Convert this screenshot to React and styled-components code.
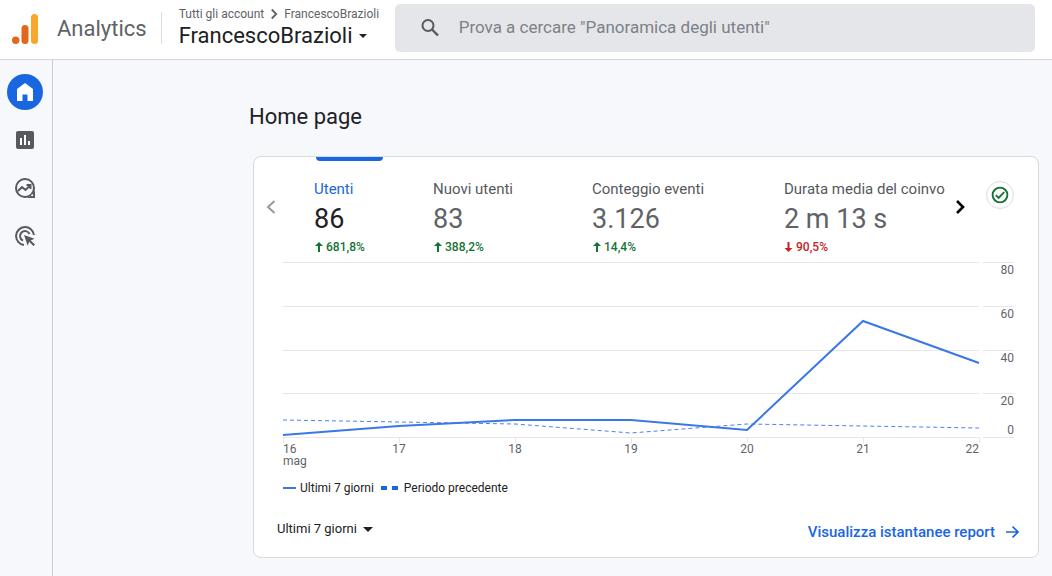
import React from "react";
import styled, { createGlobalStyle } from "styled-components";

const GlobalStyle = createGlobalStyle`
  *, *::before, *::after { box-sizing: border-box; }
  html, body, #root { height: 100%; }
  body {
    margin: 0;
    background: #f7f8fb;
    color: #202124;
    font-family: Roboto, "Liberation Sans", sans-serif;
    font-size: 12px;
    line-height: 16px;
  }
  button, input, select { font: inherit; color: inherit; }
  button { padding: 0; border: 0; background: none; cursor: pointer; text-align: left; }
  svg { display: block; flex: none; }
`;

const Page = styled.div`
  min-height: 100%;
  display: flex;
  flex-direction: column;
`;

const Header = styled.header`
  display: flex;
  height: 60px;
  padding: 0 17px 0 12px;
  background: #fff;
  border-bottom: 1px solid #d3d5d9;
`;

const Brand = styled.a`
  display: flex;
  align-items: center;
  gap: 18px;
  height: 57px;
  color: #5f6368;
  font-size: 22px;
  line-height: 28px;
  text-decoration: none;
`;

const Divider = styled.div`
  width: 1px;
  height: 32px;
  margin: 12px 17px 0 14px;
  background: #dadce0;
`;

const Account = styled.div`
  display: flex;
  flex-direction: column;
  width: 216px;
  padding-top: 6px;
`;

const Crumbs = styled.nav`
  display: flex;
  align-items: center;
  gap: 4px;
  white-space: nowrap;
  color: #5f6368;
`;

const Crumb = styled.a`
  color: inherit;
  text-decoration: none;
`;

const AccountButton = styled.button`
  display: flex;
  align-items: center;
  gap: 6px;
  font-size: 22px;
  line-height: 28px;
  color: #202124;
`;

const Search = styled.label`
  flex: 1;
  display: flex;
  align-items: center;
  gap: 18px;
  height: 48px;
  margin-top: 4px;
  padding: 0 24px;
  border-radius: 5px;
  background: #e5e6ea;
`;

const SearchInput = styled.input`
  flex: 1;
  min-width: 0;
  padding: 0 0 2px;
  border: 0;
  outline: 0;
  background: none;
  font-size: 17px;
  line-height: 24px;
  &::placeholder { color: #7c8186; opacity: 1; }
`;

const Body = styled.div`
  flex: 1;
  display: flex;
`;

const Sidebar = styled.nav`
  display: flex;
  flex-direction: column;
  align-items: center;
  gap: 12px;
  width: 53px;
  padding: 14px 3px 0 0;
  border-right: 1px solid #cacdd1;
`;

const NavLink = styled.a`
  display: flex;
  align-items: center;
  justify-content: center;
  width: 36px;
  height: 36px;
  border-radius: 50%;
  color: ${(p) => (p.$active ? "#fff" : "#56595e")};
  background: ${(p) => (p.$active ? "#1967e0" : "transparent")};
`;

const Main = styled.main`
  flex: 1;
  min-width: 0;
  padding: 43px 13px 18px 200px;
`;

const Title = styled.h1`
  margin: 0 0 25px -4px;
  font-size: 22px;
  line-height: 28px;
  font-weight: 400;
`;

const Card = styled.section`
  padding: 0 14px 9px 10px;
  border: 1px solid #d8dade;
  border-radius: 8px;
  background: #fff;
`;

const CardTop = styled.div`
  display: flex;
  height: 105px;
  padding-right: 10px;
`;

const Arrow = styled.button`
  display: flex;
  justify-content: center;
  width: 16px;
  height: 16px;
  margin-top: 42px;
  color: ${(p) => (p.disabled ? "#9a9a9a" : "#000")};
`;

const Metrics = styled.div`
  flex: 1;
  min-width: 0;
  display: grid;
  grid-template-columns: 119fr 159fr 192fr 157fr;
  margin: 0 11px 0 34px;
`;

const Metric = styled.button`
  position: relative;
  display: flex;
  flex-direction: column;
  min-width: 0;
  padding-top: 22px;
  color: #5f6368;
  ${(p) => p.$active && `
    &::before {
      content: "";
      position: absolute;
      top: 0;
      left: 2px;
      width: 67px;
      height: 4px;
      border-radius: 0 0 4px 4px;
      background: #1967e0;
    }
  `}
`;

const MetricName = styled.span`
  font-size: 15px;
  line-height: 20px;
  white-space: nowrap;
  color: ${(p) => (p.$active ? "#1967e0" : "#55595e")};
`;

const MetricValue = styled.span`
  font-size: 27px;
  line-height: 40px;
  white-space: nowrap;
  color: ${(p) => (p.$active ? "#202124" : "#5f6368")};
`;

const Delta = styled.span`
  display: flex;
  align-items: center;
  gap: 2px;
  font-weight: 500;
  color: ${(p) => (p.$down ? "#c5221f" : "#137333")};
`;

const Status = styled.button`
  display: flex;
  align-items: center;
  justify-content: center;
  width: 28px;
  height: 28px;
  margin: 24px 0 0 18px;
  border: 1px solid #dadce0;
  border-radius: 50%;
  color: #137333;
`;

const Chart = styled.div`
  display: grid;
  grid-template-columns: 1fr 31px;
  column-gap: 4px;
  padding: 0 10px 0 19px;
  color: #5f6368;
`;

const Plot = styled.svg`
  width: 100%;
  height: 181px;
  overflow: visible;
`;

const YAxis = styled.div`
  display: flex;
  flex-direction: column;
  height: 176px;
  border-bottom: 1px solid #e8e8e8;
  text-align: right;
`;

const YBand = styled.div`
  flex: 1;
  display: flex;
  flex-direction: column;
  justify-content: space-between;
  border-top: 1px solid #e8e8e8;
  line-height: 14px;
`;

const XAxis = styled.div`
  display: grid;
  grid-template-columns: 1fr repeat(5, 2fr) 1fr;
  line-height: 12px;
  text-align: center;
`;

const XLabel = styled.span`
  white-space: pre-line;
  &:first-child { text-align: left; }
  &:last-child { text-align: right; }
`;

const Legend = styled.div`
  display: flex;
  gap: 7px;
  padding: 13px 0 0 19px;
`;

const LegendItem = styled.span`
  display: flex;
  align-items: center;
  gap: 4px;
`;

const CardFooter = styled.footer`
  display: flex;
  align-items: center;
  justify-content: space-between;
  margin-top: 20px;
  padding: 0 5px 0 13px;
`;

const RangeField = styled.label`
  display: flex;
  align-items: center;
  height: 32px;
  padding-bottom: 6px;
`;

const RangeSelect = styled.select`
  appearance: none;
  margin-right: -10px;
  padding: 0 16px 0 0;
  border: 0;
  outline: 0;
  background: none;
  font-size: 13px;
  line-height: 18px;
`;

const ReportLink = styled.a`
  display: flex;
  align-items: center;
  gap: 11px;
  color: #1967e0;
  font-size: 15px;
  line-height: 20px;
  font-weight: 500;
  text-decoration: none;
`;

const Logo = () => (
  <svg width="27" height="30" viewBox="0 0 27 30" aria-hidden="true">
    <rect x="19" y="0" width="7" height="30" rx="3.5" fill="#f9a62b" />
    <rect x="9.5" y="11" width="7" height="19" rx="3.5" fill="#e2661c" />
    <circle cx="3.7" cy="26.3" r="3.7" fill="#e2661c" />
  </svg>
);

const Chevron = ({ left, size = 16, stroke = 2.2 }) => (
  <svg width={size} height={size} viewBox="0 0 16 16" fill="none" stroke="currentColor" strokeWidth={stroke} aria-hidden="true">
    <path d={left ? "M10.5 2 4 8l6.5 6" : "m5 2 6 6-6 6"} />
  </svg>
);

const Caret = ({ width = 10 }) => (
  <svg width={width} height={width / 2} viewBox="0 0 10 5" fill="currentColor" aria-hidden="true">
    <path d="M0 0h10L5 5z" />
  </svg>
);

const Trend = ({ down }) => (
  <svg width="10" height="12" viewBox="0 0 10 12" fill="none" stroke="currentColor" strokeWidth="2" aria-hidden="true">
    {down ? <><path d="M4.5 1v8" /><path d="M.5 7h8L4.5 11z" fill="currentColor" stroke="none" /></>
          : <><path d="M5 3v8" /><path d="M1 5h8L5 1z" fill="currentColor" stroke="none" /></>}
  </svg>
);

const icons = {
  home: (
    <svg width="18" height="20" viewBox="0 0 18 20" fill="currentColor" aria-hidden="true">
      <path d="M9 1 1 7v12h5.5v-6.5h5V19H17V7z" />
    </svg>
  ),
  reports: (
    <svg width="18" height="18" viewBox="0 0 18 18" aria-hidden="true">
      <rect width="18" height="18" rx="2" fill="currentColor" />
      <path d="M5 14V7M9 14V4M13 14v-4" stroke="#fff" strokeWidth="2" />
    </svg>
  ),
  explore: (
    <svg width="20" height="20" viewBox="0 0 20 20" fill="none" stroke="currentColor" strokeWidth="2" aria-hidden="true">
      <circle cx="10" cy="10" r="9" />
      <path d="m3 13 4-4 3.5 3L15 7.5M11.5 7H15.5v4" />
      <path d="M20 10v10H10c4 0 10-4 10-10z" fill="currentColor" stroke="none" />
      <circle cx="17.2" cy="17.3" r="1" fill="#fff" stroke="none" />
    </svg>
  ),
  ads: (
    <svg width="20" height="20" viewBox="0 0 20 20" fill="none" stroke="currentColor" strokeWidth="2" aria-hidden="true">
      <path d="M9 19A9 9 0 1 1 19 9" />
      <path d="M8 14.6A5 5 0 1 1 14.6 8" />
      <path d="m9 9 10.5 3.8-3.8 1.6 4.3 4.2-1.5 1.5-4.3-4.3-1.5 4z" fill="currentColor" stroke="none" />
    </svg>
  ),
};

const navItems = [
  { id: "home", label: "Home page" },
  { id: "reports", label: "Report" },
  { id: "explore", label: "Esplora" },
  { id: "ads", label: "Pubblicità" },
];

const metrics = [
  { name: "Utenti", value: "86", delta: "681,8%", active: true },
  { name: "Nuovi utenti", value: "83", delta: "388,2%" },
  { name: "Conteggio eventi", value: "3.126", delta: "14,4%" },
  { name: "Durata media del coinvo", value: "2 m 13 s", delta: "90,5%", down: true },
];

const days = ["16\nmag", "17", "18", "19", "20", "21", "22"];
const gridLines = [0, 44, 88, 131, 175];
const current = [173, 164, 158, 158, 168, 59, 101];
const previous = [158, 160, 162, 171, 162, 164, 166];
const toPoints = (values) => values.map((y, i) => `${i * 116},${y}`).join(" ");

export default function App() {
  return (
    <Page>
      <GlobalStyle />
      <Header>
        <Brand href="#"><Logo />Analytics</Brand>
        <Divider />
        <Account>
          <Crumbs>
            <Crumb href="#">Tutti gli account</Crumb>
            <Chevron size={12} stroke={2.4} />
            <Crumb href="#">FrancescoBrazioli</Crumb>
          </Crumbs>
          <AccountButton>FrancescoBrazioli<Caret width={8} /></AccountButton>
        </Account>
        <Search>
          <svg width="22" height="22" viewBox="0 0 22 22" fill="none" stroke="#55585d" strokeWidth="2" aria-hidden="true">
            <circle cx="9" cy="8.5" r="5.5" />
            <path d="m13 12.5 6 6" strokeWidth="2.4" />
          </svg>
          <SearchInput type="search" aria-label="Cerca" placeholder={'Prova a cercare "Panoramica degli utenti"'} />
        </Search>
      </Header>
      <Body>
        <Sidebar aria-label="Menu">
          {navItems.map(({ id, label }) => (
            <NavLink key={id} href={`#${id}`} aria-label={label} $active={id === "home"}>{icons[id]}</NavLink>
          ))}
        </Sidebar>
        <Main>
          <Title>Home page</Title>
          <Card>
            <CardTop>
              <Arrow aria-label="Indietro" disabled><Chevron left stroke={2} /></Arrow>
              <Metrics>
                {metrics.map((m) => (
                  <Metric key={m.name} $active={m.active}>
                    <MetricName $active={m.active}>{m.name}</MetricName>
                    <MetricValue $active={m.active}>{m.value}</MetricValue>
                    <Delta $down={m.down}><Trend down={m.down} />{m.delta}</Delta>
                  </Metric>
                ))}
              </Metrics>
              <Arrow aria-label="Avanti"><Chevron stroke={2.6} /></Arrow>
              <Status aria-label="Qualità dei dati">
                <svg width="18" height="18" viewBox="0 0 18 18" fill="none" stroke="currentColor" strokeWidth="1.9" aria-hidden="true">
                  <circle cx="9" cy="9" r="7.4" />
                  <path d="m4.8 9.2 2.8 2.8 5.6-5.8" />
                </svg>
              </Status>
            </CardTop>
            <Chart>
              <Plot viewBox="0 0 696 181" preserveAspectRatio="none" fill="none" role="img" aria-label="Utenti per giorno">
                <g stroke="#e8e8e8">
                  {gridLines.map((y) => <path key={y} d={`M0 ${y + 0.5}H696`} vectorEffect="non-scaling-stroke" />)}
                  {days.map((d, i) => <path key={d} d={`M${i * 116 + 0.5} 175v6`} vectorEffect="non-scaling-stroke" />)}
                </g>
                <polyline points={toPoints(previous)} stroke="#4a83ee" strokeDasharray="4 3" vectorEffect="non-scaling-stroke" />
                <polyline points={toPoints(current)} stroke="#3b78e7" strokeWidth="2" vectorEffect="non-scaling-stroke" />
              </Plot>
              <YAxis>
                <YBand>80</YBand>
                <YBand>60</YBand>
                <YBand>40</YBand>
                <YBand><span>20</span><span>0</span></YBand>
              </YAxis>
              <XAxis>
                {days.map((d) => <XLabel key={d}>{d}</XLabel>)}
              </XAxis>
            </Chart>
            <Legend>
              <LegendItem>
                <svg width="13" height="2" aria-hidden="true"><path d="M0 1h13" stroke="#3b78e7" strokeWidth="2" /></svg>
                Ultimi 7 giorni
              </LegendItem>
              <LegendItem>
                <svg width="19" height="4" aria-hidden="true"><path d="M0 2h19" stroke="#1967e0" strokeWidth="4" strokeDasharray="6 5" /></svg>
                Periodo precedente
              </LegendItem>
            </Legend>
            <CardFooter>
              <RangeField>
                <RangeSelect aria-label="Intervallo di date"><option>Ultimi 7 giorni</option></RangeSelect>
                <Caret />
              </RangeField>
              <ReportLink href="#report">
                Visualizza istantanee report
                <svg width="13" height="14" viewBox="0 0 13 14" fill="none" stroke="currentColor" strokeWidth="1.7" aria-hidden="true">
                  <path d="M0 7h11.5M6.5 1.5 12 7l-5.5 5.5" />
                </svg>
              </ReportLink>
            </CardFooter>
          </Card>
        </Main>
      </Body>
    </Page>
  );
}
